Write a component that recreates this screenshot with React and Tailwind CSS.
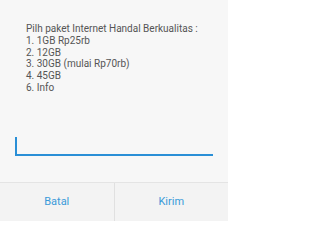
export default function App() {
  return (
    <div className="w-[228px] h-[221px] bg-[#f7f7f7] flex flex-col font-['Roboto',sans-serif] overflow-hidden">
      <div className="flex-1 flex flex-col">
        <div className="pt-[23px] pl-[26px] text-[10px] leading-[11.8px] text-[#555555]">
          <p>Pilh paket Internet Handal Berkualitas :</p>
          <p>1. 1GB Rp25rb</p>
          <p>2. 12GB</p>
          <p>3. 30GB (mulai Rp70rb)</p>
          <p>4. 45GB</p>
          <p>6. Info</p>
        </div>
        <div className="mt-[43px] mx-[15px] h-[19px] border-b-2 border-[#2a8fd6] flex items-end">
          <span className="w-[1.5px] h-[17px] bg-[#2a8fd6]"></span>
        </div>
      </div>
      <div className="h-[39px] border-t border-[#e4e4e4] bg-[#f3f3f3] flex text-[11px] text-[#3a9ad9]">
        <button className="flex-1 flex items-center justify-center border-r border-[#e0e0e0]">Batal</button>
        <button className="flex-1 flex items-center justify-center">Kirim</button>
      </div>
    </div>
  );
}
